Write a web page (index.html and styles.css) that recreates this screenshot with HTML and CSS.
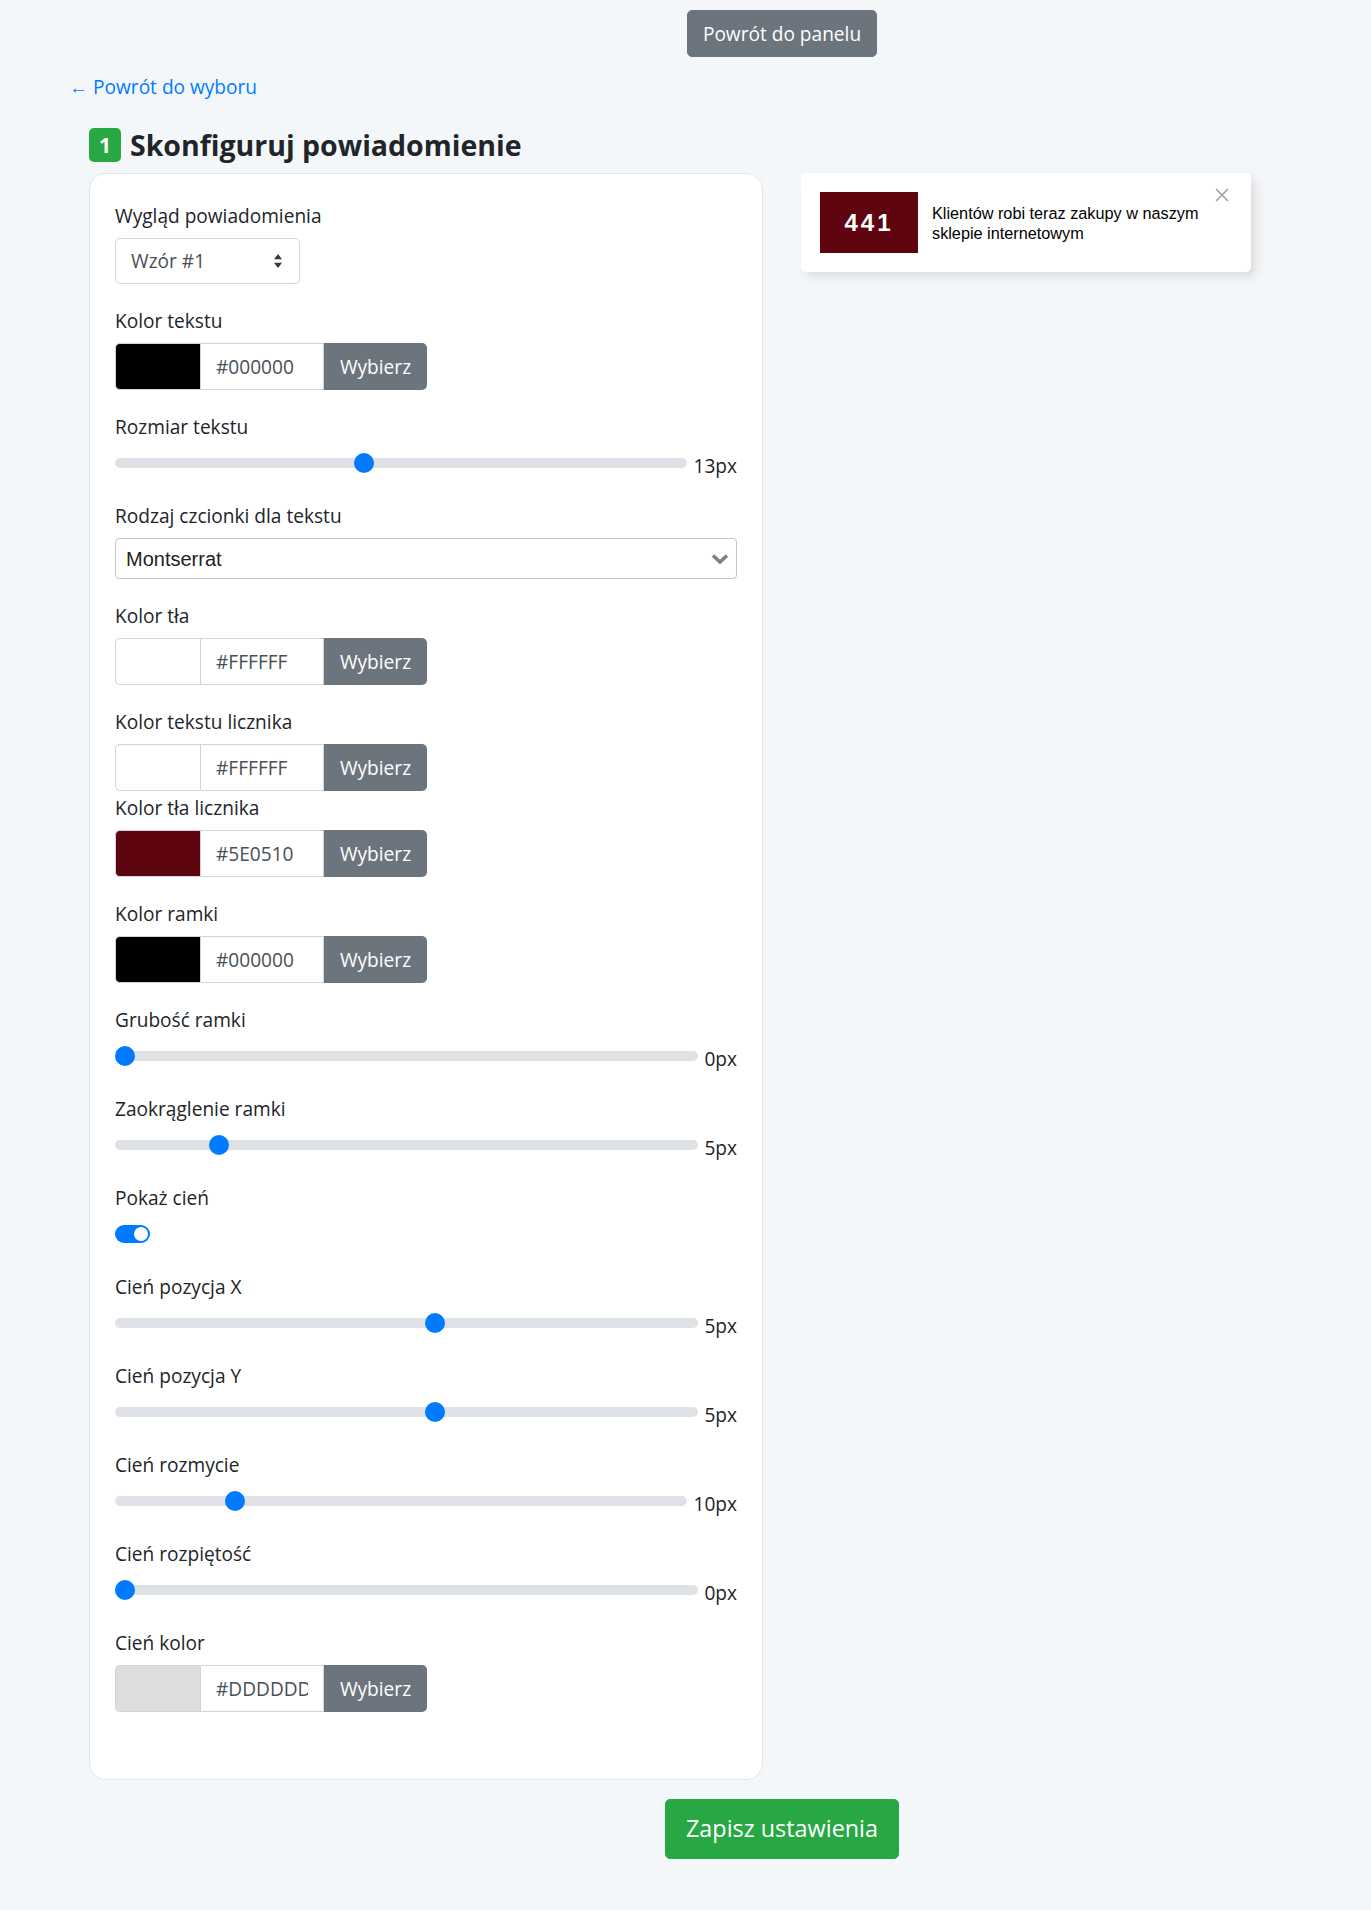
FILE: index.html
```html
<!DOCTYPE html>
<html lang="pl">
<head>
	<meta charset="utf-8">
	<title>Skonfiguruj powiadomienie</title>
	<link rel="stylesheet" href="styles.css">
</head>
<body>
	<div class="center-bar top">
		<a class="btn btn-secondary" href="#">Powrót do panelu</a>
	</div>

	<div class="back-link"><a href="#">&larr; Powrót do wyboru</a></div>

	<h4 class="step-title"><span class="badge">1</span><span>Skonfiguruj powiadomienie</span></h4>

	<div class="main-row">
		<div class="settings-card">

			<div class="form-group">
				<label>Wygląd powiadomienia</label>
				<div class="custom-select">
					<span>Wzór #1</span>
					<svg width="8" height="14" viewBox="0 0 4 7"><path d="M2 0L0 2.6h4zM2 7L0 4.4h4z" fill="#343a40"/></svg>
				</div>
			</div>

			<div class="form-group">
				<label>Kolor tekstu</label>
				<div class="color-group">
					<span class="swatch" style="background:#000000"></span>
					<input class="color-input" type="text" value="#000000">
					<button class="pick-btn">Wybierz</button>
				</div>
			</div>

			<div class="form-group">
				<label>Rozmiar tekstu</label>
				<div class="range-row">
					<input type="range" min="0" max="30" value="13">
					<span class="range-val">13px</span>
				</div>
			</div>

			<div class="form-group">
				<label>Rodzaj czcionki dla tekstu</label>
				<div class="font-select">
					<span>Montserrat</span>
					<svg width="18" height="12" viewBox="0 0 18 12"><polyline points="2,2.5 9,9 16,2.5" fill="none" stroke="#808080" stroke-width="3.5"/></svg>
				</div>
			</div>

			<div class="form-group">
				<label>Kolor tła</label>
				<div class="color-group">
					<span class="swatch" style="background:#FFFFFF"></span>
					<input class="color-input" type="text" value="#FFFFFF">
					<button class="pick-btn">Wybierz</button>
				</div>
			</div>

			<div class="form-group tight">
				<label>Kolor tekstu licznika</label>
				<div class="color-group">
					<span class="swatch" style="background:#FFFFFF"></span>
					<input class="color-input" type="text" value="#FFFFFF">
					<button class="pick-btn">Wybierz</button>
				</div>
			</div>

			<div class="form-group">
				<label>Kolor tła licznika</label>
				<div class="color-group">
					<span class="swatch" style="background:#5E0510"></span>
					<input class="color-input" type="text" value="#5E0510">
					<button class="pick-btn">Wybierz</button>
				</div>
			</div>

			<div class="form-group">
				<label>Kolor ramki</label>
				<div class="color-group">
					<span class="swatch" style="background:#000000"></span>
					<input class="color-input" type="text" value="#000000">
					<button class="pick-btn">Wybierz</button>
				</div>
			</div>

			<div class="form-group">
				<label>Grubość ramki</label>
				<div class="range-row">
					<input type="range" min="0" max="20" value="0">
					<span class="range-val">0px</span>
				</div>
			</div>

			<div class="form-group">
				<label>Zaokrąglenie ramki</label>
				<div class="range-row">
					<input type="range" min="0" max="30" value="5">
					<span class="range-val">5px</span>
				</div>
			</div>

			<div class="form-group">
				<label>Pokaż cień</label>
				<div class="switch-row">
					<span class="switch"><span class="knob"></span></span>
				</div>
			</div>

			<div class="form-group">
				<label>Cień pozycja X</label>
				<div class="range-row">
					<input type="range" min="-50" max="50" value="5">
					<span class="range-val">5px</span>
				</div>
			</div>

			<div class="form-group">
				<label>Cień pozycja Y</label>
				<div class="range-row">
					<input type="range" min="-50" max="50" value="5">
					<span class="range-val">5px</span>
				</div>
			</div>

			<div class="form-group">
				<label>Cień rozmycie</label>
				<div class="range-row">
					<input type="range" min="0" max="50" value="10">
					<span class="range-val">10px</span>
				</div>
			</div>

			<div class="form-group">
				<label>Cień rozpiętość</label>
				<div class="range-row">
					<input type="range" min="0" max="50" value="0">
					<span class="range-val">0px</span>
				</div>
			</div>

			<div class="form-group">
				<label>Cień kolor</label>
				<div class="color-group">
					<span class="swatch" style="background:#DDDDDD"></span>
					<input class="color-input" type="text" value="#DDDDDD">
					<button class="pick-btn">Wybierz</button>
				</div>
			</div>

		</div>

		<div class="preview">
			<div class="notify">
				<div class="counter">441</div>
				<div class="notify-text">Klientów robi teraz zakupy w naszym sklepie internetowym</div>
				<span class="notify-close">
					<svg width="14" height="14" viewBox="0 0 14 14"><path d="M1 1L13 13M13 1L1 13" stroke="#a0a0a0" stroke-width="1.6"/></svg>
				</span>
			</div>
		</div>
	</div>

	<div class="center-bar bottom">
		<button class="btn btn-success btn-lg">Zapisz ustawienia</button>
	</div>
</body>
</html>
```

FILE: styles.css
```css
html, body {
	margin: 0;
	padding: 0;
}

body {
	background: #f4f7fa;
	font-family: "Open Sans", "Noto Sans", sans-serif;
	font-size: 19.1px;
	line-height: 30px;
	color: #212529;
	min-height: 1910px;
}

a {
	color: #007bff;
	text-decoration: none;
}

/* buttons */
.btn {
	display: inline-block;
	font-family: inherit;
	font-size: 19.1px;
	line-height: 30px;
	padding: 7.5px 15px;
	border: 1px solid transparent;
	border-radius: 5px;
	color: #fff;
	cursor: pointer;
}

.btn-secondary {
	background: #6c757d;
	border-color: #6c757d;
}

.btn-success {
	background: #28a745;
	border-color: #28a745;
}

.btn-lg {
	font-size: 23.4px;
	line-height: 37.5px;
	padding: 10px 20px;
}

.center-bar {
	display: flex;
	justify-content: center;
	padding-left: 193px;
}

.center-bar.top {
	padding-top: 10px;
}

.center-bar.bottom {
	padding-top: 19px;
}

.back-link {
	margin-top: 15px;
	padding-left: 69px;
}

.step-title {
	display: flex;
	align-items: center;
	gap: 9px;
	height: 36px;
	margin: 25px 0 10px 89px;
	font-size: 28.5px;
	font-weight: 700;
	line-height: 36px;
}

.badge {
	background: #28a745;
	color: #fff;
	border-radius: 5px;
	width: 32px;
	height: 34px;
	line-height: 34px;
	text-align: center;
	font-size: 21px;
}

.main-row {
	display: flex;
	align-items: flex-start;
	gap: 38px;
	padding-left: 89px;
}

/* settings card */
.settings-card {
	width: 674px;
	box-sizing: border-box;
	background: #fff;
	border: 1px solid #e2e6ea;
	border-radius: 16px;
	padding: 25px 25px 47px;
}

.form-group {
	margin-bottom: 20px;
}

.form-group.tight {
	margin-bottom: 0;
}

.form-group label {
	display: block;
	line-height: 30px;
	padding-top: 1.5px;
	margin-bottom: 7.5px;
}

.custom-select {
	width: 185px;
	height: 46px;
	box-sizing: border-box;
	border: 1px solid #ced4da;
	border-radius: 5px;
	padding: 0 17px 0 15px;
	display: flex;
	align-items: center;
	justify-content: space-between;
	color: #495057;
}

.font-select {
	height: 41px;
	box-sizing: border-box;
	border: 1px solid #c4c4c4;
	border-radius: 4px;
	padding: 0 7px 0 10px;
	display: flex;
	align-items: center;
	justify-content: space-between;
	font-family: "Liberation Sans", Arial, sans-serif;
	font-size: 20px;
	color: #222;
}

.color-group {
	display: flex;
	width: 312px;
	height: 47px;
}

.swatch {
	width: 85px;
	box-sizing: border-box;
	border: 1px solid #ced4da;
	border-right: 0;
	border-radius: 5px 0 0 5px;
}

.color-input {
	width: 124px;
	box-sizing: border-box;
	border: 1px solid #ced4da;
	padding: 0 15px;
	margin: 0;
	font-family: inherit;
	font-size: 19.1px;
	color: #495057;
	background: #fff;
	outline: none;
}

.pick-btn {
	width: 103px;
	border: 0;
	margin: 0;
	padding: 0;
	background: #6c757d;
	color: #fff;
	font-family: inherit;
	font-size: 19.1px;
	border-radius: 0 5px 5px 0;
}

/* sliders */
.range-row {
	display: flex;
	align-items: center;
	gap: 6px;
	height: 30px;
}

.range-row input[type=range] {
	-webkit-appearance: none;
	appearance: none;
	flex: 1;
	margin: 0 0 3px;
	height: 20px;
	background: transparent;
}

.range-row input[type=range]::-webkit-slider-runnable-track {
	height: 10px;
	background: #dee2e6;
	border-radius: 10px;
}

.range-row input[type=range]::-webkit-slider-thumb {
	-webkit-appearance: none;
	width: 20px;
	height: 20px;
	margin-top: -5px;
	border-radius: 50%;
	background: #007bff;
	border: 0;
}

.range-val {
	padding-top: 4px;
}

/* switch */
.switch-row {
	height: 30px;
	padding-top: 5px;
	box-sizing: border-box;
}

.switch {
	display: flex;
	justify-content: flex-end;
	align-items: center;
	width: 35px;
	height: 18px;
	box-sizing: border-box;
	padding: 0 2px;
	background: #007bff;
	border-radius: 9px;
}

.knob {
	width: 14px;
	height: 14px;
	border-radius: 50%;
	background: #fff;
}

/* preview */
.notify {
	position: relative;
	width: 450px;
	box-sizing: border-box;
	display: flex;
	align-items: center;
	gap: 14px;
	padding: 19px 45px 19px 19px;
	background: #fff;
	border-radius: 5px;
	box-shadow: 5px 5px 10px #dddddd;
}

.counter {
	width: 98px;
	height: 61px;
	flex: none;
	display: flex;
	align-items: center;
	justify-content: center;
	background: #5E0510;
	color: #fff;
	font-family: "Liberation Sans", Arial, sans-serif;
	font-weight: bold;
	font-size: 24px;
	letter-spacing: 3px;
}

.notify-text {
	font-family: "Liberation Sans", Arial, sans-serif;
	font-size: 16.25px;
	line-height: 20px;
	color: #000;
}

.notify-close {
	position: absolute;
	top: 15px;
	right: 22px;
	line-height: 0;
}
```
